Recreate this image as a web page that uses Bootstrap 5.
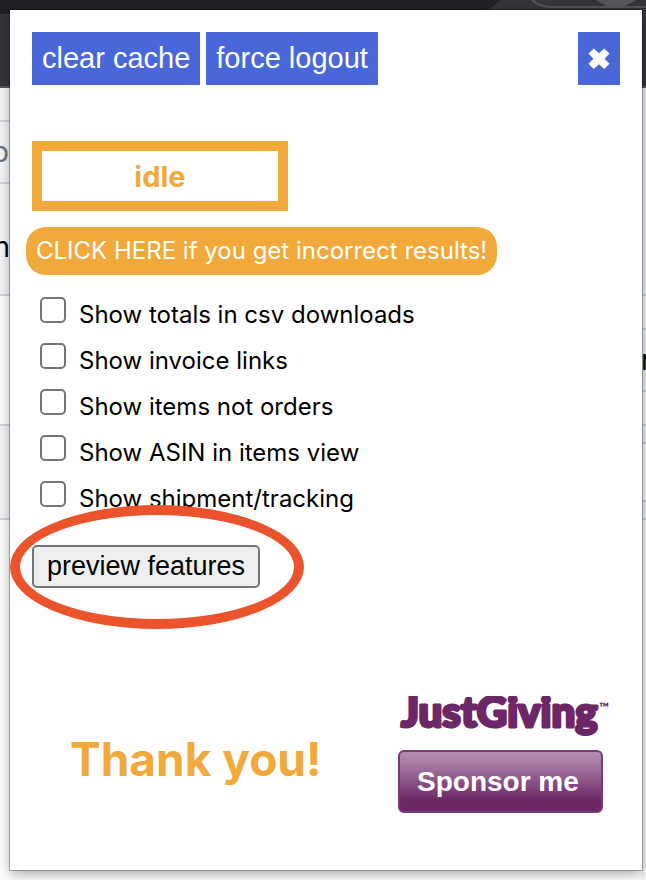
<!DOCTYPE html>
<html lang="en">
<head>
<meta charset="utf-8">
<meta name="viewport" content="width=device-width, initial-scale=1">
<title>Order history extension</title>
<link href="https://cdn.jsdelivr.net/npm/bootstrap@5.3.0/dist/css/bootstrap.min.css" rel="stylesheet">
<style>
  :root { --amber: #f1a93b; --action: #4967d9; --plum: #6d2766; --line: #d0d6dc; }
  body { font-family: Inter, "Noto Sans", sans-serif; color: #000; }
  .stage { display: grid; min-height: 100vh; }
  .stage > * { grid-area: 1 / 1; min-width: 0; }

  /* browser window behind the popup */
  .behind { overflow: hidden; }
  .chrome-tabs { height: 14px; background: #202124; }
  .chrome-tabs svg { display: block; }
  .chrome-bar { height: 74px; background: #35363a; border-bottom: 2px solid #58595c; }
  .edge { width: 10px; overflow: hidden; font-size: 28px; }
  .edge > div { display: flex; align-items: center; border-bottom: 2px solid var(--line); }
  .edge-start > div { justify-content: flex-end; }
  .edge-end { width: 5px; background: #f6f6f6; }
  .tint { background: #f4f6f9; }
  .edge-end .tint { background: #ebedf0; }
  .h-s { height: 18px; } .h-m { height: 34px; } .h-l { height: 62px; }
  .h-xl { height: 94px; } .h-2xl { height: 112px; } .h-3xl { height: 130px; } .h-4xl { height: 208px; }
  .h-58 { height: 58px; }
  .faint { color: #6a737d; padding-right: 1px; }
  .low { padding-top: 16px; }

  /* popup */
  .popup { margin: 10px 4px 10px 10px; padding: 22px; background: #fff; box-shadow: 0 0 0 1px rgba(0, 0, 0, .28), 0 4px 12px rgba(0, 0, 0, .35); z-index: 1; }
  .btn-action { --bs-btn-color: #fff; --bs-btn-bg: var(--action); --bs-btn-hover-color: #fff; --bs-btn-hover-bg: #3a57c6; --bs-btn-active-color: #fff; --bs-btn-active-bg: #3a57c6; --bs-btn-border-width: 0; --bs-btn-border-radius: 0; --bs-btn-padding-x: 10px; --bs-btn-padding-y: 0; --bs-btn-font-size: 29px; --bs-btn-font-family: "Liberation Sans", Arial, sans-serif; --bs-btn-line-height: 53px; height: 53px; }
  .btn-close-x { width: 42px; }
  .tools { gap: 6px; }
  .status { width: 256px; height: 70px; margin-top: 56px; border: 10px solid var(--amber); color: var(--amber); font-size: 29px; line-height: 52px; }
  .btn-hint { --bs-btn-color: #fff; --bs-btn-bg: var(--amber); --bs-btn-hover-color: #fff; --bs-btn-hover-bg: #e09a2d; --bs-btn-border-width: 0; --bs-btn-border-radius: 20px; --bs-btn-padding-x: 10px; --bs-btn-padding-y: 0; --bs-btn-font-size: 24px; --bs-btn-line-height: 48px; margin: 16px 0 17px -6px; }
  .option { gap: 13px; padding-left: 8px; font-size: 24px; line-height: 46px; }
  .option .form-check-input { width: 26px; height: 26px; margin-top: 5px; border: 2px solid #767676; border-radius: 5px; }
  .preview-wrap { margin-top: 23px; }
  .btn-preview { --bs-btn-color: #000; --bs-btn-bg: #efefef; --bs-btn-border-color: #767676; --bs-btn-hover-color: #000; --bs-btn-hover-bg: #e5e5e5; --bs-btn-hover-border-color: #4f4f4f; --bs-btn-border-width: 2px; --bs-btn-border-radius: 5px; --bs-btn-padding-x: 13px; --bs-btn-padding-y: 0; --bs-btn-font-size: 27px; --bs-btn-font-family: "Liberation Sans", Arial, sans-serif; --bs-btn-line-height: 39px; }
  .ring { position: absolute; inset: -40px -44px -41px -22px; border: 10px solid #eb532d; border-radius: 50%; pointer-events: none; }
  .thanks { color: var(--amber); font-size: 46px; padding: 8px 0 0 38px; }
  .foot { margin-top: 108px; }
  .giving { width: 212px; margin-right: 10px; }
  .giving svg { display: block; }
</style>
</head>
<body>
<div class="stage">
  <div class="behind d-flex flex-column" aria-hidden="true">
    <div class="chrome-tabs">
      <svg class="ms-auto" width="166" height="14" viewBox="0 0 166 14"><path d="M0 14C10 10 16 3 21 0H166V14Z" fill="#35363a"/><path d="M52 0Q60 7 72 7H166" fill="none" stroke="#55565a" stroke-width="2"/><path d="M116 0Q135 15 156 0Z" fill="#55565a"/></svg>
    </div>
    <div class="chrome-bar"></div>
    <div class="d-flex flex-grow-1 justify-content-between">
      <div class="edge edge-start">
        <div class="tint h-m"></div>
        <div class="tint h-l faint">p</div>
        <div class="tint h-2xl low"><span>n</span></div>
        <div class="h-3xl"></div>
        <div class="tint h-xl"></div>
      </div>
      <div class="edge edge-end">
        <div class="tint h-4xl"></div>
        <div class="h-m"></div>
        <div class="tint h-l">r</div>
        <div class="h-m"></div>
        <div class="tint h-s"></div>
        <div class="h-58"></div>
        <div class="tint h-s"></div>
      </div>
    </div>
  </div>

  <main class="popup">
    <div class="tools d-flex">
      <button type="button" class="btn btn-action">clear cache</button>
      <button type="button" class="btn btn-action">force logout</button>
      <button type="button" class="btn btn-action btn-close-x ms-auto d-flex align-items-center justify-content-center" aria-label="Close">
        <svg width="22" height="22" viewBox="0 0 22 22" fill="#fff"><path d="M5.800 .5L11 5.200L16.200 .5L21.500 5.600L16.600 10.700L21.500 15.800L16.200 21L11 16.200L5.800 21L.5 15.800L5.400 10.700L.5 5.600Z"/></svg>
      </button>
    </div>

    <div class="status text-center fw-bold" role="status">idle</div>
    <button type="button" class="btn btn-hint">CLICK HERE if you get incorrect results!</button>

    <div class="option d-flex align-items-start"><input class="form-check-input" type="checkbox" id="totals"><label for="totals">Show totals in csv downloads</label></div>
    <div class="option d-flex align-items-start"><input class="form-check-input" type="checkbox" id="invoice"><label for="invoice">Show invoice links</label></div>
    <div class="option d-flex align-items-start"><input class="form-check-input" type="checkbox" id="items"><label for="items">Show items not orders</label></div>
    <div class="option d-flex align-items-start"><input class="form-check-input" type="checkbox" id="asin"><label for="asin">Show ASIN in items view</label></div>
    <div class="option d-flex align-items-start"><input class="form-check-input" type="checkbox" id="shipment"><label for="shipment">Show shipment/tracking</label></div>

    <div class="d-flex preview-wrap">
      <div class="position-relative">
        <button type="button" class="btn btn-preview">preview features</button>
        <div class="ring"></div>
      </div>
    </div>

    <div class="foot d-flex align-items-center justify-content-between">
      <div class="thanks fw-bold">Thank you!</div>
      <a class="giving" href="#" aria-label="JustGiving, sponsor me">
        <svg width="212" height="118" viewBox="0 0 212 118">
          <defs>
            <linearGradient id="plum" x1="0" y1="0" x2="0" y2="1"><stop offset="0" stop-color="#b48db1"/><stop offset=".2" stop-color="#a87da5"/><stop offset=".8" stop-color="#6d2766"/><stop offset="1" stop-color="#6d2766"/></linearGradient>
          </defs>
          <text x="3" y="31" font-family="Lato, sans-serif" font-weight="900" font-size="42" fill="#6d2766" stroke="#6d2766" stroke-width="3" stroke-linejoin="round">JustGiving</text>
          <text x="201" y="16" font-family="Lato, sans-serif" font-weight="900" font-size="13" fill="#6d2766">™</text>
          <rect x="1" y="55" width="203" height="61" rx="5" fill="url(#plum)" stroke="#7a3a75" stroke-width="2"/>
          <text x="19" y="95" font-family="Liberation Sans, Arial, sans-serif" font-weight="700" font-size="28" fill="#fff">Sponsor me</text>
        </svg>
      </a>
    </div>
  </main>
</div>
<script src="https://cdn.jsdelivr.net/npm/bootstrap@5.3.0/dist/js/bootstrap.bundle.min.js"></script>
</body>
</html>
